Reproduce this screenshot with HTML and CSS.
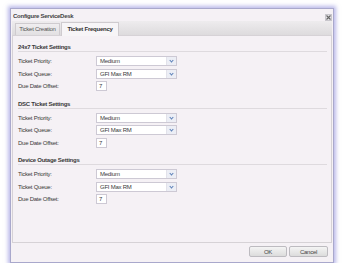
FILE: index.html
```html
<!DOCTYPE html>
<html lang="en">
<head>
  <meta charset="UTF-8" />
  <title>Configure ServiceDesk</title>
  <link rel="stylesheet" href="styles.css">
</head>
<body>
  <div class="dialog">
    <div class="titlebar">
      <span class="title">Configure ServiceDesk</span>
      <span class="close">
        <svg width="5" height="5" viewBox="0 0 5 5"><path d="M0.5 0.5L4.5 4.5M4.5 0.5L0.5 4.5" stroke="#666" stroke-width="1.1" /></svg>
      </span>
    </div>
    <div class="tabstrip">
      <div class="tab">Ticket Creation</div>
      <div class="tab active">Ticket Frequency</div>
    </div>
    <div class="panel">
      <div class="section">
        <div class="section-title">24x7 Ticket Settings</div>
        <div class="rows">
          <div class="row"><label>Ticket Priority:</label><div class="select">Medium<span class="arrow"></span></div></div>
          <div class="row"><label>Ticket Queue:</label><div class="select">GFI Max RM<span class="arrow"></span></div></div>
          <div class="row"><label>Due Date Offset:</label><div class="input">7</div></div>
        </div>
      </div>
      <div class="section">
        <div class="section-title">DSC Ticket Settings</div>
        <div class="rows">
          <div class="row"><label>Ticket Priority:</label><div class="select">Medium<span class="arrow"></span></div></div>
          <div class="row"><label>Ticket Queue:</label><div class="select">GFI Max RM<span class="arrow"></span></div></div>
          <div class="row"><label>Due Date Offset:</label><div class="input">7</div></div>
        </div>
      </div>
      <div class="section">
        <div class="section-title">Device Outage Settings</div>
        <div class="rows">
          <div class="row"><label>Ticket Priority:</label><div class="select">Medium<span class="arrow"></span></div></div>
          <div class="row"><label>Ticket Queue:</label><div class="select">GFI Max RM<span class="arrow"></span></div></div>
          <div class="row"><label>Due Date Offset:</label><div class="input">7</div></div>
        </div>
      </div>
    </div>
    <div class="footer">
      <button>OK</button>
      <button>Cancel</button>
    </div>
  </div>
</body>
</html>
```

FILE: styles.css
```css
body {
  margin: 0;
  background: #fff;
  font-family: "Liberation Sans", Arial, sans-serif;
  font-size: 6px;
  letter-spacing: -0.25px;
  color: #3a3a3a;
  white-space: nowrap;
}
.dialog {
  margin: 8px 0 0 10px;
  width: 324px;
  height: 255px;
  box-sizing: border-box;
  border: 1px solid #a9a8cc;
  background: #f5f1f5;
  box-shadow: 0 0 4px 2px rgba(130, 128, 215, 0.55);
  display: flex;
  flex-direction: column;
}
.titlebar {
  height: 12px;
  display: flex;
  align-items: center;
  justify-content: space-between;
  padding: 0 1px 0 2px;
}
.title {
  font-weight: bold;
  color: #444;
  margin-top: 1px;
}
.close {
  width: 7px;
  height: 7px;
  box-sizing: border-box;
  border: 1px solid #c8c6cc;
  background: #e4e2e6;
  display: flex;
  align-items: center;
  justify-content: center;
  margin-top: 4px;
}
.tabstrip {
  height: 14px;
  margin: 0 1px;
  background: linear-gradient(#eeecee, #dddbdd);
  display: flex;
  align-items: flex-end;
  padding-left: 3px;
  gap: 1px;
}
.tab {
  width: 45px;
  height: 12px;
  box-sizing: border-box;
  border: 1px solid #cfcbcf;
  border-bottom: none;
  background: linear-gradient(#f0eef0, #e2e0e2);
  color: #555;
  line-height: 11px;
  text-align: center;
}
.tab.active {
  width: 58px;
  height: 14px;
  background: #f7f5f7;
  font-weight: bold;
  color: #333;
  line-height: 13px;
  margin-bottom: -1px;
  position: relative;
}
.panel {
  height: 208px;
  box-sizing: border-box;
  margin: 0 1px;
  border: 1px solid #d6d2d6;
  padding: 7px 4px 0 5px;
}
.section + .section {
  margin-top: 7.25px;
}
.section-title {
  font-weight: bold;
  height: 8px;
  line-height: 8px;
  border-bottom: 1px solid #dedade;
}
.rows {
  margin-top: 2.75px;
}
.row {
  height: 12.5px;
  display: flex;
  align-items: center;
}
.row label {
  width: 78px;
}
.select {
  width: 81px;
  height: 10px;
  box-sizing: border-box;
  border: 1px solid #cdc9d4;
  background: #fff;
  padding-left: 3px;
  line-height: 8px;
  position: relative;
}
.arrow {
  position: absolute;
  right: 0;
  top: 0;
  width: 9px;
  height: 8px;
  background: #eceef5;
  border-left: 1px solid #e2e2ea;
}
.arrow::after {
  content: "";
  position: absolute;
  left: 3px;
  top: 2px;
  width: 2px;
  height: 2px;
  border-right: 1px solid #5a7fb8;
  border-bottom: 1px solid #5a7fb8;
  transform: rotate(45deg);
}
.input {
  width: 11px;
  height: 10px;
  box-sizing: border-box;
  border: 1px solid #cdc9d4;
  background: #fff;
  padding-left: 2px;
  line-height: 8px;
}
.footer {
  flex: 1;
  display: flex;
  justify-content: flex-end;
  align-items: flex-start;
  padding: 3px 5px 0 0;
  gap: 2px;
}
.footer button {
  width: 38px;
  height: 11px;
  padding: 0;
  font-family: inherit;
  font-size: 6px;
  letter-spacing: -0.25px;
  color: #444;
  border: 1px solid #bdbbc0;
  border-radius: 2px;
  background: linear-gradient(#f4f4f4, #dcdcdc);
}
.footer button + button {
  width: 39px;
}
```
